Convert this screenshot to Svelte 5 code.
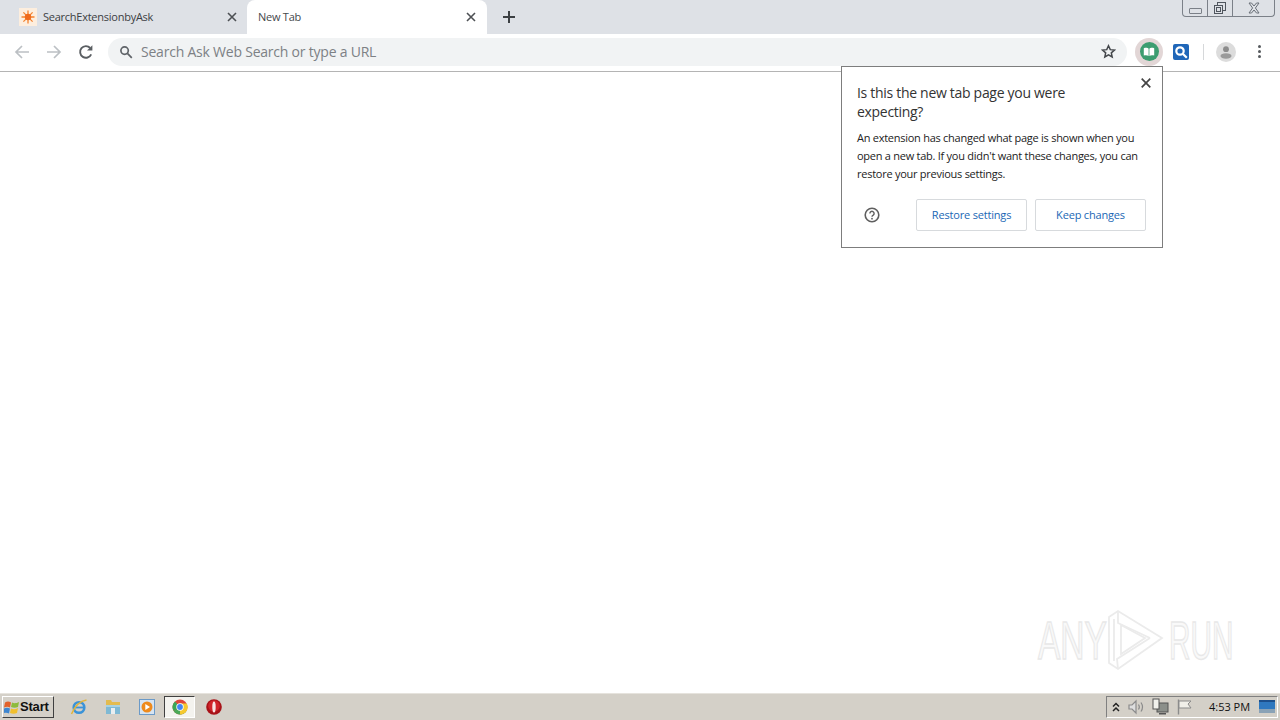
<script>
	let tabs = [
		{ title: "SearchExtensionbyAsk", active: false },
		{ title: "New Tab", active: true }
	];
</script>

<div class="screen">
	<div class="tabstrip">
		{#each tabs as tab}
			<div class="tab" class:active={tab.active}>
				{#if !tab.active}
					<svg class="favicon" width="18" height="18" viewBox="0 0 18 18">
						<rect width="18" height="18" fill="#fdeede" />
						<g stroke="#f4832f" stroke-width="1.300">
							<path d="M9 2.500v13M2.500 9h13M4.400 4.400l9.200 9.200M13.600 4.400l-9.200 9.200" />
						</g>
						<circle cx="9" cy="9" r="3.200" fill="#ef6a1c" />
					</svg>
				{/if}
				<span class="tab-title">{tab.title}</span>
				<svg class="tab-close" width="10" height="10" viewBox="0 0 10 10">
					<path d="M1 1l8 8M9 1l-8 8" stroke="#4d5054" stroke-width="1.600" />
				</svg>
			</div>
		{/each}
		<svg class="newtab" width="14" height="14" viewBox="0 0 14 14">
			<path d="M7 1v12M1 7h12" stroke="#3c4043" stroke-width="2" />
		</svg>
		<div class="winbtns">
			<div class="winbtn min"><span></span></div>
			<div class="winbtn max">
				<svg width="14" height="14" viewBox="0 0 14 14" fill="none" stroke="#50565e">
					<rect x="4.500" y="1.500" width="8" height="8" />
					<rect x="1.500" y="4.500" width="8" height="8" fill="#dee1e6" />
					<rect x="3.500" y="6.500" width="4" height="4" />
				</svg>
			</div>
			<div class="winbtn close">
				<svg width="14" height="12" viewBox="0 0 14 12" fill="none" stroke="#6a7078">
					<path d="M2 1h2.500L7 4l2.500-3H12L8.400 6 12 11H9.500L7 8l-2.500 3H2l3.600-5z" />
				</svg>
			</div>
		</div>
	</div>

	<div class="toolbar">
		<svg class="nav" width="16" height="16" viewBox="0 0 16 16" fill="none" stroke="#bcc0c4" stroke-width="1.700">
			<path d="M15 8H2M8 2L2 8l6 6" />
		</svg>
		<svg class="nav" width="16" height="16" viewBox="0 0 16 16" fill="none" stroke="#bcc0c4" stroke-width="1.700">
			<path d="M1 8h13M8 2l6 6-6 6" />
		</svg>
		<svg class="nav" width="16" height="16" viewBox="0 0 16 16" fill="none" stroke="#5a5e62" stroke-width="1.900">
			<path d="M13.200 10.400A5.800 5.800 0 1 1 12.200 4" />
			<path d="M14.400 1.200v5.400H9z" fill="#5a5e62" stroke="none" />
		</svg>
		<div class="omnibox">
			<svg width="14" height="14" viewBox="0 0 14 14" fill="none" stroke="#5f6368" stroke-width="1.700">
				<circle cx="5.600" cy="5.600" r="3.700" />
				<path d="M8.400 8.400l4.400 4.400" />
			</svg>
			<span class="placeholder">Search Ask Web Search or type a URL</span>
			<svg class="star" width="15" height="15" viewBox="0 0 24 24" fill="none" stroke="#45484c" stroke-width="2.400">
				<path d="M12 2.800l2.800 6.200 6.700.7-5 4.500 1.400 6.600-5.900-3.400-5.900 3.400 1.400-6.600-5-4.500 6.700-.7z" />
			</svg>
		</div>
		<div class="ext-halo">
			<div class="ext-green">
				<svg width="12" height="10" viewBox="0 0 12 10">
					<path d="M.8 1.200c2-.6 4-.4 4.800.5v7.300C4.600 8.300 2.800 8.100.8 8.600zM11.200 1.200c-2-.6-4-.4-4.800.5v7.300c1-.7 2.800-.9 4.800-.4z" fill="#fff" />
				</svg>
			</div>
		</div>
		<div class="ext-ask">
			<svg width="14" height="14" viewBox="0 0 14 14" fill="none" stroke="#fff" stroke-width="2.200">
				<circle cx="6" cy="6" r="3.700" />
				<path d="M8.800 8.800l4 4" />
			</svg>
		</div>
		<div class="sep"></div>
		<div class="avatar">
			<svg width="20" height="20" viewBox="0 0 20 20">
				<circle cx="10" cy="10" r="10" fill="#dcdcdc" />
				<circle cx="10" cy="7.200" r="2.900" fill="#8c8c8c" />
				<ellipse cx="10" cy="14" rx="5.500" ry="2.700" fill="#9a9a9a" />
			</svg>
		</div>
		<div class="dots"><i></i><i></i><i></i></div>
	</div>

	<main class="page">
		<div class="bubble">
			<svg class="bubble-close" width="10" height="10" viewBox="0 0 10 10">
				<path d="M.7.700l8.600 8.600M9.300.700L.7 9.300" stroke="#444" stroke-width="1.700" />
			</svg>
			<h2>Is this the new tab page you were expecting?</h2>
			<p>An extension has changed what page is shown when you open a new tab. If you didn't want these changes, you can restore your previous settings.</p>
			<div class="bubble-actions">
				<svg class="help" width="16" height="16" viewBox="0 0 16 16" fill="none">
					<circle cx="8" cy="8" r="6.800" stroke="#5f5f5f" stroke-width="1.600" />
					<path d="M5.900 6.400a2.100 2.100 0 1 1 3.300 1.700c-.8.500-1.200.9-1.200 1.700" stroke="#5f5f5f" stroke-width="1.400" />
					<circle cx="8" cy="11.700" r=".9" fill="#5f5f5f" />
				</svg>
				<button>Restore settings</button>
				<button>Keep changes</button>
			</div>
		</div>

		<div class="watermark">
			<span class="any">ANY</span>
			<svg width="58" height="62" viewBox="0 0 58 62" fill="none" stroke="#ebebeb" stroke-width="1.800">
				<path d="M3 8l9-6 44 27-44 31-9-6z" />
				<path d="M8 10v42M12 2v12l32 15" />
				<path d="M15 16l24 13-24 16z" />
				<path d="M12 60l-1-10 33-21" />
			</svg>
			<span class="run">RUN</span>
		</div>
	</main>

	<div class="taskbar">
		<button class="start">
			<svg width="16" height="16" viewBox="0 0 16 16">
				<path d="M1 3.500c2-1.200 4-1.200 6 0l-1 5c-2-1-3.500-1-6 0z" fill="#e2622b" />
				<path d="M8 3.500c2 1 4 1 7-.5l-1 5c-2.500 1-4.500 1-7 0z" fill="#8dbb3d" />
				<path d="M0 9.500c2-1 4-1 6 0l-1 5c-2-1-4-1-6 0z" fill="#3e86d0" />
				<path d="M7 9.500c2 1 4.500 1 7-.5l-1 5c-2.500 1-4.500 1-7 0z" fill="#f1bf2d" />
			</svg>
			Start
		</button>
		<div class="quick">
			<svg width="18" height="18" viewBox="0 0 18 18" fill="none">
				<circle cx="9" cy="9.500" r="5.300" stroke="#3b93d8" stroke-width="2.600" />
				<path d="M4 9.500h10" stroke="#3b93d8" stroke-width="1.800" />
				<path d="M1.500 16c3-7 8-13 15-14" stroke="#e3b53a" stroke-width="1.500" />
			</svg>
			<svg width="18" height="18" viewBox="0 0 18 18">
				<path d="M2 2h5l1 2h8v4H2z" fill="#e3bb4f" />
				<rect x="2" y="7" width="14" height="9" fill="#7fb9d4" />
				<path d="M2 7h14v2H2z" fill="#a9d2e2" />
				<rect x="7" y="10" width="4" height="6" fill="#e9eef0" />
			</svg>
			<svg width="18" height="18" viewBox="0 0 18 18">
				<rect x="1.500" y="1.500" width="15" height="15" fill="#d6e4f2" stroke="#6b9ac8" />
				<circle cx="9" cy="9" r="5.500" fill="#ee8a1c" />
				<path d="M7.300 6v6l4.700-3z" fill="#fff" />
			</svg>
			<div class="task-active">
				<svg width="16" height="16" viewBox="0 0 16 16">
					<circle cx="8" cy="8" r="7.500" fill="#e0463a" />
					<path d="M8 8L1.500 11.800A7.500 7.500 0 0 1 3 2.400z" fill="#3aa757" />
					<path d="M8 8l6.500 3.800A7.500 7.500 0 0 1 1.500 11.800z" fill="#4aa957" />
					<path d="M8 4.500h6.800A7.500 7.500 0 0 1 8 15.500z" fill="#f6c92f" />
					<circle cx="8" cy="8" r="3.700" fill="#fff" />
					<circle cx="8" cy="8" r="2.900" fill="#4285f4" />
				</svg>
			</div>
			<svg width="18" height="18" viewBox="0 0 18 18">
				<circle cx="9" cy="9" r="7.800" fill="#a81218" />
				<circle cx="9" cy="8" r="5.800" fill="#d0242a" />
				<ellipse cx="9" cy="9" rx="1.700" ry="5.500" fill="#f8e4e4" />
			</svg>
		</div>
		<div class="tray">
			<svg width="10" height="12" viewBox="0 0 10 12" fill="none" stroke="#222" stroke-width="1.500">
				<path d="M2 5.500l3-3 3 3M2 10l3-3 3 3" />
			</svg>
			<svg width="18" height="18" viewBox="0 0 18 18" fill="none" stroke="#8b8b8b" stroke-width="1.200">
				<path d="M2 7h3l4-4v12l-4-4H2z" fill="#dedede" />
				<path d="M11.500 6.500c1 1.500 1 3.500 0 5M14 4.500c2 3 2 6 0 9" />
			</svg>
			<svg width="18" height="18" viewBox="0 0 18 18">
				<rect x="6" y="5" width="11" height="9" fill="#8b8f8a" stroke="#555" />
				<rect x="2" y="1" width="6" height="10" fill="#f1f1ec" stroke="#555" />
				<rect x="8" y="15" width="7" height="1.500" fill="#555" />
			</svg>
			<svg width="18" height="18" viewBox="0 0 18 18" fill="none" stroke="#8b8b8b">
				<path d="M3.500 1.500v15" stroke-width="1.400" />
				<path d="M4 3h12l-3 3 3 4H4z" fill="#f0efe9" />
			</svg>
			<span class="clock">4:53 PM</span>
			<svg class="desk" width="16" height="13" viewBox="0 0 16 13">
				<rect width="16" height="13" fill="#2f78bf" />
				<rect y="9" width="16" height="4" fill="#8aa2b6" />
				<rect width="16" height="2" fill="#1d4f8b" />
			</svg>
		</div>
	</div>
</div>

<style>
	:global(body) {
		margin: 0;
		background: #fff;
	}

	.screen {
		width: 1280px;
		height: 720px;
		display: flex;
		flex-direction: column;
		overflow: hidden;
		font-family: "Open Sans", "Noto Sans", sans-serif;
		color: #222;
	}

	.tabstrip {
		height: 34px;
		flex: none;
		display: flex;
		align-items: flex-start;
		padding-left: 8px;
		background: #dee1e6;
	}

	.tab {
		width: 239px;
		height: 34px;
		box-sizing: border-box;
		display: flex;
		align-items: center;
		padding: 0 10px 0 11px;
		font-size: 11px;
		color: #3c4043;
	}

	.tab.active {
		width: 240px;
		padding: 0 11px;
		background: #fff;
		border-radius: 8px 8px 0 0;
		color: #45484c;
	}

	.favicon {
		margin: 0 6px 0 0;
	}

	.tab-title {
		flex: 1;
		padding-bottom: 2px;
		letter-spacing: -0.25px;
	}

	.newtab {
		margin: 10px 0 0 15px;
	}

	.winbtns {
		margin-left: auto;
		margin-right: 5px;
		display: flex;
		height: 16px;
		border: 1px solid #7b8088;
		border-top: none;
		border-radius: 0 0 4px 4px;
	}

	.winbtn {
		display: flex;
		align-items: center;
		justify-content: center;
	}

	.winbtn.min {
		width: 24px;
		border-right: 1px solid #7b8088;
	}

	.winbtn.min span {
		width: 11px;
		height: 4px;
		margin-top: 5px;
		border: 1px solid #7b8088;
		border-radius: 1px;
	}

	.winbtn.max {
		width: 24px;
		border-right: 1px solid #7b8088;
	}

	.winbtn.close {
		width: 41px;
	}

	.toolbar {
		height: 35px;
		flex: none;
		display: flex;
		align-items: center;
		padding: 0 0 2px 14px;
		background: #fff;
		border-bottom: 1px solid #b4b4b4;
	}

	.nav {
		margin-right: 16px;
	}

	.omnibox {
		width: 1019px;
		height: 28px;
		margin-left: -2px;
		box-sizing: border-box;
		display: flex;
		align-items: center;
		padding: 0 11px;
		border-radius: 14px;
		background: #f1f3f4;
	}

	.placeholder {
		flex: 1;
		margin-left: 8px;
		font-size: 14px;
		letter-spacing: -0.22px;
		color: #7d8185;
	}

	.ext-halo {
		width: 28px;
		height: 28px;
		margin-left: 8px;
		border-radius: 50%;
		background: #e2d6d6;
		display: flex;
		align-items: center;
		justify-content: center;
	}

	.ext-green {
		width: 19px;
		height: 19px;
		border-radius: 50%;
		background: #3c9d70;
		display: flex;
		align-items: center;
		justify-content: center;
	}

	.ext-ask {
		width: 16px;
		height: 16px;
		margin-left: 10px;
		background: #1f66b8;
		border-radius: 2px;
		display: flex;
		align-items: center;
		justify-content: center;
	}

	.sep {
		width: 1px;
		height: 16px;
		margin-left: 14px;
		background: #d6d8da;
	}

	.avatar {
		height: 20px;
		margin-left: 12px;
	}

	.dots {
		margin-left: 22px;
		display: flex;
		flex-direction: column;
		gap: 2px;
	}

	.dots i {
		width: 3px;
		height: 3px;
		border-radius: 50%;
		background: #55595d;
	}

	.page {
		flex: 1;
		position: relative;
		background: #fff;
	}

	.bubble {
		position: absolute;
		left: 841px;
		top: -6px;
		width: 322px;
		height: 182px;
		box-sizing: border-box;
		padding: 16px 15px 0 15px;
		background: #fff;
		border: 1px solid #7d7d7d;
	}

	.bubble-close {
		position: absolute;
		top: 11px;
		right: 11px;
	}

	h2 {
		margin: 0;
		width: 240px;
		font-size: 14px;
		font-weight: 400;
		line-height: 19px;
		letter-spacing: -0.3px;
		color: #333;
	}

	p {
		margin: 8px 0 0 0;
		font-size: 11px;
		line-height: 18px;
		letter-spacing: -0.26px;
		color: #222;
	}

	.bubble-actions {
		margin-top: 16px;
		display: flex;
		align-items: center;
		gap: 8px;
	}

	.help {
		flex: none;
		margin: 0 28px 0 7px;
	}

	button {
		font-family: inherit;
	}

	.bubble-actions button {
		flex: none;
		width: 111px;
		height: 32px;
		padding: 0 0 2px 0;
		font-size: 11px;
		letter-spacing: -0.18px;
		color: #1a67b5;
		background: #fff;
		border: 1px solid #d7dadd;
		border-radius: 2px;
	}

	.watermark {
		position: absolute;
		left: 1038px;
		top: 537px;
		display: flex;
		align-items: center;
		gap: 5px;
		font-family: "Liberation Sans", sans-serif;
		font-size: 54px;
		color: #f9f9f9;
		-webkit-text-stroke: 1.500px #e8e8e8;
	}

	.watermark span {
		width: 63px;
		transform-origin: left center;
	}

	.any {
		transform: scaleX(0.62);
	}

	.run {
		transform: scaleX(0.55);
	}

	.taskbar {
		flex: none;
		height: 28px;
		display: flex;
		align-items: center;
		box-sizing: border-box;
		padding-left: 2px;
		background: #d4d0c8;
		border-top: 1px solid #fff;
		box-shadow: inset 0 1px 0 #e6e3dd;
	}

	.start {
		width: 52px;
		height: 22px;
		display: flex;
		align-items: center;
		gap: 0;
		padding: 0 0 0 1px;
		font-family: "Liberation Sans", sans-serif;
		font-size: 13px;
		font-weight: 700;
		letter-spacing: -0.2px;
		color: #111;
		background: #d4d0c8;
		border: 1px solid;
		border-color: #fff #404040 #404040 #fff;
	}

	.quick {
		display: flex;
		align-items: center;
		margin-left: 16px;
		gap: 16px;
	}

	.task-active {
		width: 31px;
		height: 22px;
		box-sizing: border-box;
		margin: 0 -6px 0 -8px;
		display: flex;
		align-items: center;
		justify-content: center;
		background: #f4f3ef;
		border: 1px solid;
		border-color: #404040 #fff #fff #404040;
	}

	.tray {
		margin-left: auto;
		margin-right: 2px;
		height: 22px;
		width: 172px;
		box-sizing: border-box;
		display: flex;
		align-items: center;
		padding: 0 2px 0 4px;
		gap: 6px;
		border: 1px solid;
		border-color: #808080 #fff #fff #808080;
	}

	.clock {
		margin-left: 10px;
		font-family: "Open Sans", sans-serif;
		font-size: 11px;
		color: #111;
	}

	.desk {
		margin-left: auto;
	}
</style>
